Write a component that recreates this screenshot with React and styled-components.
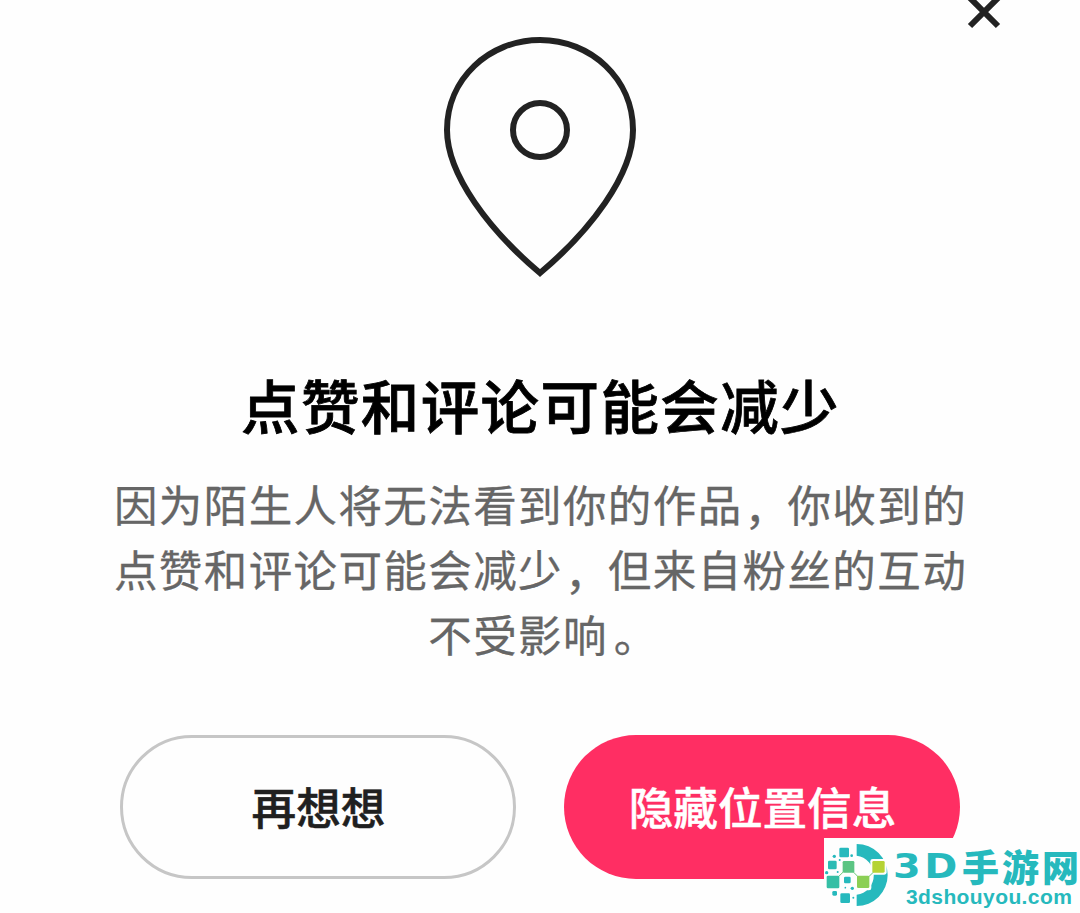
import styled, { createGlobalStyle } from 'styled-components';
import React, { Component } from 'react';

const GlobalStyle = createGlobalStyle`
  body {
    margin: 0;
    background-color: #fefefe;
    overflow: hidden;
  }
`;

const Sheet = styled.main`
  display: flex;
  flex-direction: column;
  align-items: center;
  width: 1080px;
  height: 913px;
  overflow: hidden;
  font-family: "Noto Sans CJK SC", sans-serif;
`;

const TopBar = styled.header`
  display: flex;
  justify-content: flex-end;
  width: 100%;
  height: 34px;
  box-sizing: border-box;
  padding-right: 78px;
`;

const CloseButton = styled.button`
  width: 36px;
  height: 34px;
  padding: 0;
  border: 0;
  background: none;
`;

const PinIcon = styled.svg`
  display: block;
  flex: none;
  width: 200px;
  height: 246px;
`;

const Title = styled.h1`
  margin: 79px 0 0;
  padding-left: 1px;
  font-size: 58.5px;
  font-weight: 500;
  letter-spacing: 1.4px;
  line-height: 90px;
  color: #000;
  -webkit-text-stroke: 0.8px #000;
`;

const Message = styled.p`
  margin: 22px 0 0;
  padding-left: 1px;
  font-size: 43.5px;
  letter-spacing: 1.4px;
  line-height: 65px;
  text-align: center;
  white-space: nowrap;
  color: #666;
  -webkit-text-stroke: 0.3px #666;
`;

// punctuation is set a little further from the preceding character
const Mark = styled.span`
  position: relative;
  left: ${props => props.$shift}px;
  top: ${props => props.$drop || 0}px;
`;

const Actions = styled.div`
  display: flex;
  gap: 48px;
  margin-top: 69px;
`;

const Button = styled.button`
  width: 396px;
  height: 144px;
  padding: 0 0 4px 1px;
  box-sizing: border-box;
  border: ${props => (props.$primary ? '0' : '3px solid #c6c6c6')};
  border-radius: 72px;
  background-color: ${props => (props.$primary ? '#ff2e63' : 'transparent')};
  color: ${props => (props.$primary ? '#fff' : '#202020')};
  font-family: inherit;
  font-size: 44.6px;
  font-weight: 500;
  -webkit-text-stroke: 0.5px currentColor;
`;

// sits over the corner of the primary button
const SiteBadge = styled.aside`
  position: absolute;
  left: 824px;
  top: 838px;
  display: flex;
  width: 256px;
  height: 75px;
  overflow: hidden;
  background-color: #fefefe;
  color: #26b9bd;
`;

const BadgeLogo = styled.svg`
  flex: none;
  width: 68px;
  height: 75px;
`;

const BadgeText = styled.div`
  display: flex;
  flex-direction: column;
  white-space: nowrap;
`;

const BadgeName = styled.div`
  display: flex;
  align-items: center;
  height: 48px;
  padding: 7px 0 0 1px;
  box-sizing: border-box;
  font-size: 37px;
  font-weight: 900;
  line-height: 32px;
`;

const BadgeLatin = styled.span`
  width: 69px;
  font-family: "DejaVu Sans", sans-serif;
  font-size: 34px;
  font-weight: 700;
  letter-spacing: 3px;

  b {
    display: inline-block;
    transform: scaleX(1.17);
    transform-origin: left;
  }
`;

const BadgeHan = styled.span`
  width: 119px;
  letter-spacing: 3px;
`;

const BadgeUrl = styled.div`
  padding-left: 14px;
  font-family: "Liberation Sans", sans-serif;
  font-size: 21px;
  font-weight: 700;
  letter-spacing: 0.4px;
  line-height: 22px;
`;

const tiles = [
  [58, 38, 29, '#26b9bd'],
  [24, 77, 26, '#2bbbb4'],
  [68, 78, 35, '#5bc583'],
  [20, 122, 38, '#35bfa5'],
  [72, 125, 20, '#26b9bd'],
  [111, 122, 37, '#8bcf55'],
  [37, 168, 14, '#26b9bd'],
  [61, 175, 29, '#26b9bd'],
];

const dots = [
  [43, 64, 5],
  [95, 62, 4],
  [59, 75, 3],
  [20, 113, 5],
  [53, 111, 3],
  [76, 158, 2.5],
  [97, 160, 5],
  [100, 188, 3],
];

class Badge extends Component {
  render() {
    return (
      <SiteBadge>
        <BadgeLogo viewBox="12 9 204 225">
          <path d="M110 27A93 93 0 0 1 110 213V179A59 59 0 0 0 110 62Z" fill="#26b9bd" />
          <rect x="151" y="72" width="49" height="47" rx="7" fill="#fefefe" />
          <rect x="105" y="116" width="49" height="50" rx="7" fill="#fefefe" />
          <path d="M40 140L85 96L130 141L176 96" fill="none" stroke="#68c878" strokeWidth="3" />
          {tiles.map(([x, y, size, fill]) => (
            <rect key={x + '-' + y} x={x} y={y} width={size} height={size} rx="4" fill={fill} />
          ))}
          <rect x="157" y="78" width="37" height="35" rx="4" fill="#b5d334" />
          {dots.map(([x, y, r]) => (
            <circle key={x + '-' + y} cx={x} cy={y} r={r} fill="#26b9bd" />
          ))}
        </BadgeLogo>
        <BadgeText>
          <BadgeName>
            <BadgeLatin><b>3D</b></BadgeLatin>
            <BadgeHan>手游网</BadgeHan>
          </BadgeName>
          <BadgeUrl>3dshouyou.com</BadgeUrl>
        </BadgeText>
      </SiteBadge>
    );
  }
}

class App extends Component {
  render() {
    return (
      <Sheet>
        <GlobalStyle />
        <TopBar>
          <CloseButton aria-label="关闭">
            <svg width="36" height="34" viewBox="0 0 36 34" fill="none" stroke="#222" strokeWidth="6">
              <path d="M3 -3L32 26M33 -3L4 26" />
            </svg>
          </CloseButton>
        </TopBar>
        <PinIcon viewBox="440 34 200 246" fill="none" stroke="#222" strokeWidth="6">
          <path d="M540 273C490 231 447 175 447 130C447 79 489 40 540 40S633 79 633 130C633 175 590 231 540 273Z" />
          <circle cx="540" cy="130" r="27" />
        </PinIcon>
        <Title>点赞和评论可能会减少</Title>
        <Message>
          因为陌生人将无法看到你的作品<Mark $shift={2} $drop={3}>，</Mark>你收到的<br />
          点赞和评论可能会减少<Mark $shift={2} $drop={3}>，</Mark>但来自粉丝的互动<br />
          不受影响<Mark $shift={6}>。</Mark>
        </Message>
        <Actions>
          <Button>再想想</Button>
          <Button $primary>隐藏位置信息</Button>
        </Actions>
        <Badge />
      </Sheet>
    );
  }
}

export default App;
